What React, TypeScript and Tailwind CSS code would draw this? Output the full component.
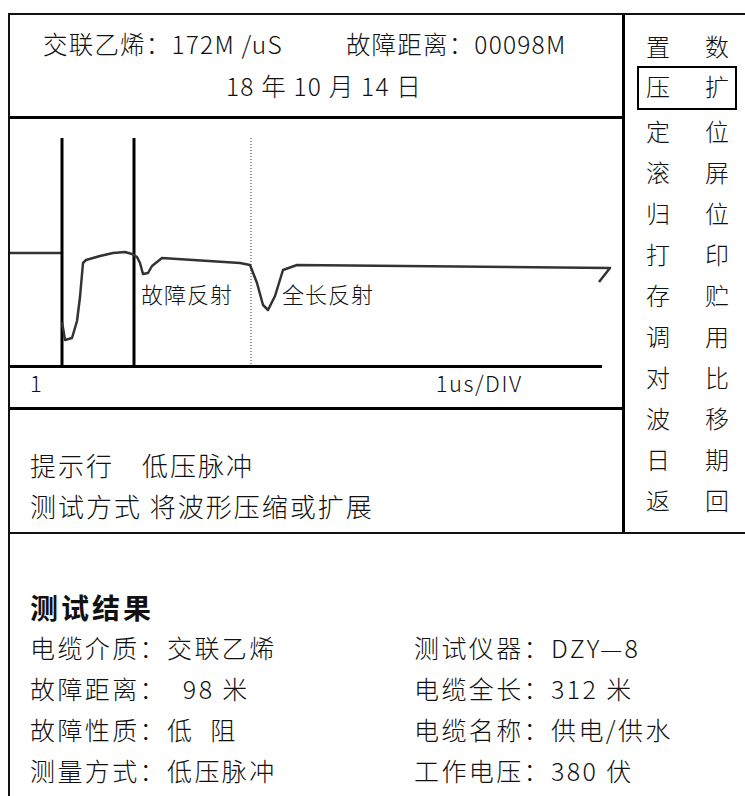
import React from "react";

const menu: [string, string][] = [
  ["定", "位"],
  ["滚", "屏"],
  ["归", "位"],
  ["打", "印"],
  ["存", "贮"],
  ["调", "用"],
  ["对", "比"],
  ["波", "移"],
  ["日", "期"],
  ["返", "回"],
];

const results: [string, string][] = [
  ["电缆介质：交联乙烯", "测试仪器：DZY—8"],
  ["故障距离：  98 米", "电缆全长：312 米"],
  ["故障性质：低  阻", "电缆名称：供电/供水"],
  ["测量方式：低压脉冲", "工作电压：380 伏"],
];

// waveform, coordinates inside the chart box
const curve =
  "M52,203 L55,221 L62,219 L67,202 L70,178 L73,144 L76,141 L90,137 L103,134 L115,133 L122,135 L127,138 L130,144 L133,155 L138,154 L142,147 L152,139 L230,144 L240,146 L247,164 L253,186 L258,191 L265,177 L273,151 L287,146 L600,149 L589,163";

function Waveform() {
  return (
    <svg width="612" height="246" viewBox="0 0 612 246" className="block">
      <line x1="0" y1="134" x2="52" y2="134" stroke="#333" strokeWidth="2.5" />
      <line x1="52" y1="19" x2="52" y2="246" stroke="#000" strokeWidth="3" />
      <line x1="124" y1="19" x2="124" y2="246" stroke="#000" strokeWidth="3" />
      <line x1="241" y1="19" x2="241" y2="246" stroke="#333" strokeWidth="1" strokeDasharray="1 2" />
      <path d={curve} fill="none" stroke="#333" strokeWidth="2.5" strokeLinejoin="round" />
    </svg>
  );
}

export default function App() {
  return (
    <div className="w-[745px] h-[796px] bg-white pt-[13px] pl-[8px] overflow-hidden text-[#111] font-light font-['Noto_Sans_CJK_SC',sans-serif]">
      <div className="h-full border-l-2 border-t-2 border-[#111]">
        <div className="flex">
          {/* left column */}
          <div className="w-[615px] border-r-[3px] border-black">
            {/* header */}
            <div className="h-[104px] border-b-[3px] border-black pt-[8px] text-[24.5px] leading-[42px] tracking-[1.2px]">
              <div className="pl-[33px] flex gap-[63px] whitespace-pre">
                <span>交联乙烯：172M /uS</span>
                <span>故障距离：00098M</span>
              </div>
              <div className="text-center pl-[16px]">18 年 10 月 14 日</div>
            </div>
            {/* chart */}
            <div className="relative">
              <Waveform />
              <span className="absolute left-[131px] top-[163px] text-[22px] leading-none tracking-[1px]">故障反射</span>
              <span className="absolute left-[272px] top-[163px] text-[22px] leading-none tracking-[1px]">全长反射</span>
            </div>
            <div className="w-[592px] h-[3px] bg-black" />
            <div className="h-[42px] border-b-[3px] border-black flex items-start pt-[2px] text-[22px] leading-[24px]">
              <span className="pl-[20px]">1</span>
              <span className="ml-[394px] tracking-[1.5px]">1us/DIV</span>
            </div>
            {/* hint */}
            <div className="h-[122px] pt-[34px] pl-[20px] text-[26px] leading-[41px] tracking-[2px]">
              <div>
                提示行<span className="ml-[28px]">低压脉冲</span>
              </div>
              <div>测试方式 将波形压缩或扩展</div>
            </div>
          </div>
          {/* menu */}
          <div className="flex-1 pt-[10px] text-[24px] leading-none">
            <div className="h-[41px] flex items-center pl-[21px] gap-[35px]">
              <span>置</span>
              <span>数</span>
            </div>
            <div className="h-[44px] ml-[12px] w-[100px] border-2 border-black flex items-center pl-[7px] pb-[4px] gap-[35px]">
              <span>压</span>
              <span>扩</span>
            </div>
            {menu.map(([a, b], i) => (
              <div key={i} className="h-[41.1px] flex items-center pl-[21px] gap-[35px]">
                <span>{a}</span>
                <span>{b}</span>
              </div>
            ))}
          </div>
        </div>
        {/* results */}
        <div className="border-t-2 border-[#111] pl-[20px] pt-[53px]">
          <div className="text-[28px] font-bold leading-[40px] tracking-[3px]">测试结果</div>
          <div className="grid grid-cols-[384px_1fr] text-[25px] leading-[41px] tracking-[2.4px]">
            {results.map(([l, r], i) => (
              <React.Fragment key={i}>
                <div className="whitespace-pre">{l}</div>
                <div className="whitespace-pre">{r}</div>
              </React.Fragment>
            ))}
          </div>
        </div>
      </div>
    </div>
  );
}
